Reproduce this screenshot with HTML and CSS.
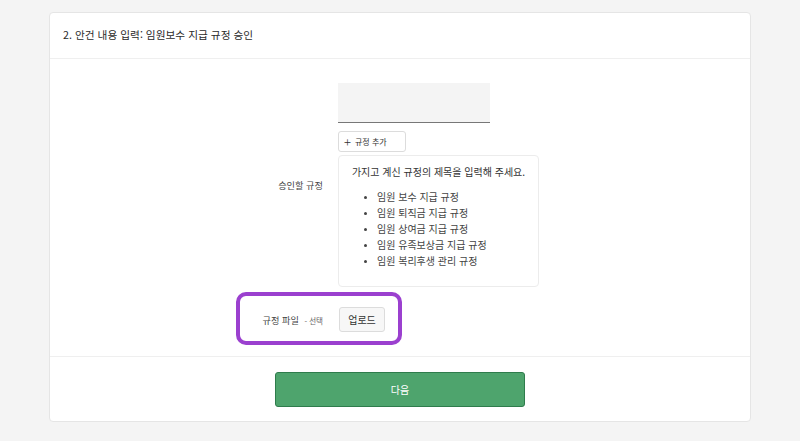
FILE: index.html
```html
<!DOCTYPE html>
<html lang="ko">
<head>
<meta charset="utf-8">
<link rel="stylesheet" href="styles.css">
</head>
<body>
<div class="card">
  <div class="card-header">2. 안건 내용 입력: 임원보수 지급 규정 승인</div>
  <div class="card-body">
    <div class="form-row">
      <div class="label">승인할 규정</div>
      <div class="field">
        <div class="text-input"></div>
        <button class="small-btn"><span class="plus">+</span> 규정 추가</button>
        <div class="info-box">
          <p class="info-title">가지고 계신 규정의 제목을 입력해 주세요.</p>
          <ul class="info-list">
            <li>임원 보수 지급 규정</li>
            <li>임원 퇴직금 지급 규정</li>
            <li>임원 상여금 지급 규정</li>
            <li>임원 유족보상금 지급 규정</li>
            <li>임원 복리후생 관리 규정</li>
          </ul>
        </div>
      </div>
    </div>
    <div class="form-row file-row">
      <div class="label">규정 파일 <span class="optional">- 선택</span></div>
      <div class="field">
        <button class="upload-btn">업로드</button>
      </div>
      <div class="highlight"></div>
    </div>
  </div>
  <div class="card-footer">
    <button class="next-btn">다음</button>
  </div>
</div>
</body>
</html>
```

FILE: styles.css
```css
* { box-sizing: border-box; }
html, body { margin: 0; padding: 0; }
body {
  background: #f4f4f4;
  font-family: "Noto Sans CJK KR", "Noto Sans", sans-serif;
  color: #333;
  width: 800px;
  height: 441px;
  overflow: hidden;
  padding-top: 12px;
}
.card {
  margin: 0 49px;
  background: #fff;
  border: 1px solid #e5e5e5;
  border-radius: 4px;
  height: 410px;
  display: flex;
  flex-direction: column;
}
.card-header {
  height: 46px;
  border-bottom: 1px solid #efefef;
  padding: 0 0 2px 13px;
  display: flex;
  align-items: center;
  font-size: 10.7px;
  color: #2b2b2b;
}
.card-body {
  padding: 24px 0 0 0;
  flex: 1;
  border-bottom: 1px solid #efefef;
}
.form-row {
  display: grid;
  grid-template-columns: 273px 201px;
  column-gap: 15px;
  align-items: center;
}
.label {
  text-align: right;
  font-size: 9.2px;
  color: #444;
}
.field { display: flex; flex-direction: column; align-items: flex-start; }
.text-input {
  width: 152px;
  height: 40px;
  background: #f4f4f4;
  border-bottom: 1px solid #777;
}
.small-btn {
  margin-top: 8px;
  height: 21px;
  width: 68px;
  padding: 0 0 0 5px;
  border: 1px solid #dcdcdc;
  border-radius: 3px;
  background: #fff;
  font-family: inherit;
  font-size: 8px;
  color: #333;
  display: flex;
  align-items: center;
  justify-content: flex-start;
  gap: 4px;
}
.plus { font-size: 13px; line-height: 1; font-weight: 300; margin-top: -1px; }
.info-box {
  margin-top: 3px;
  width: 201px;
  height: 132px;
  border: 1px solid #ececec;
  border-radius: 4px;
  padding: 8px 0 0 0;
}
.info-title {
  margin: 0;
  text-align: center;
  font-size: 10px;
  color: #333;
  line-height: 16px;
}
.info-list {
  margin: 9px 0 0 0;
  padding: 0 0 0 38px;
  font-size: 10px;
  color: #444;
  line-height: 16px;
}
.info-list li::marker { font-size: 8px; }
.file-row {
  position: relative;
  margin-top: 20px;
}
.optional { font-size: 7.5px; color: #666; margin-left: 3px; }
.upload-btn {
  margin-left: 1px;
  width: 46px;
  height: 25px;
  padding: 0;
  border: 1px solid #dcdcdc;
  border-radius: 3px;
  background: #f7f7f7;
  font-family: inherit;
  font-size: 10px;
  color: #333;
}
.highlight {
  position: absolute;
  left: 186px;
  top: -15px;
  width: 166px;
  height: 53px;
  border: 4px solid #9b40cf;
  border-radius: 10px;
  pointer-events: none;
}
.card-footer {
  height: 64px;
  display: flex;
  justify-content: center;
  padding-top: 15px;
}
.next-btn {
  width: 250px;
  height: 35px;
  background: #4ea46d;
  border: 1px solid #2f7c4c;
  border-radius: 3px;
  color: #fff;
  font-family: inherit;
  font-size: 10px;
}
```
